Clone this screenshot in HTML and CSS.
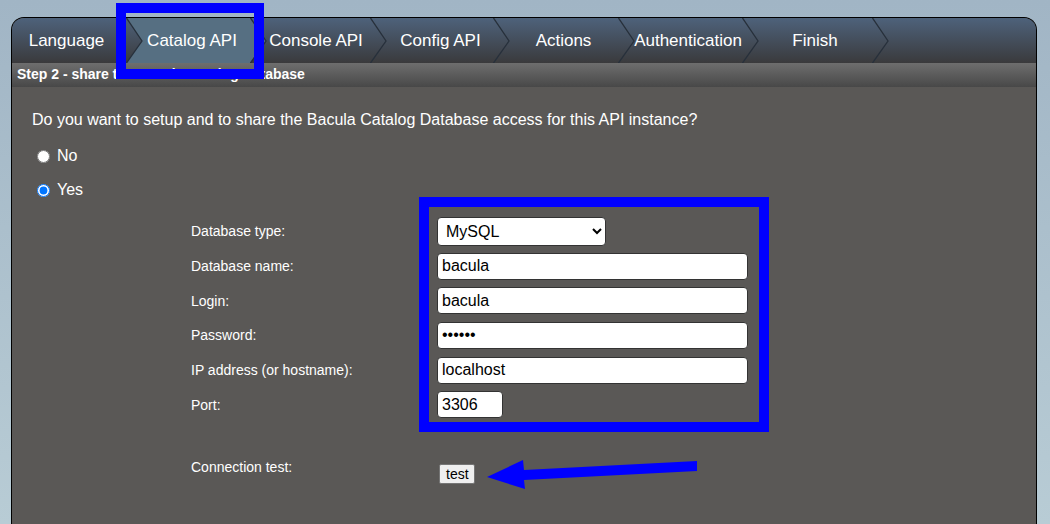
FILE: index.html
```html
<!DOCTYPE html>
<html>
<head>
<meta charset="utf-8">
<link rel="stylesheet" href="styles.css">
</head>
<body>
<div class="page">
  <div class="panel">
    <div class="tabs">
      <div class="tab t1"><span class="label">Language</span><svg class="chev" width="18" height="45" viewBox="0 0 18 45"><polyline points="0.5,0 16,23 0.5,45" fill="none" stroke="#27303b" stroke-width="1.3"/></svg></div>
      <div class="tab t2 active"><span class="label">Catalog API</span><svg class="chev" width="18" height="45" viewBox="0 0 18 45"><polyline points="0.5,0 16,23 0.5,45" fill="none" stroke="#27303b" stroke-width="1.3"/></svg></div>
      <div class="tab t3"><span class="label">Console API</span><svg class="chev" width="18" height="45" viewBox="0 0 18 45"><polyline points="0.5,0 16,23 0.5,45" fill="none" stroke="#27303b" stroke-width="1.3"/></svg></div>
      <div class="tab t4"><span class="label">Config API</span><svg class="chev" width="18" height="45" viewBox="0 0 18 45"><polyline points="0.5,0 16,23 0.5,45" fill="none" stroke="#27303b" stroke-width="1.3"/></svg></div>
      <div class="tab t5"><span class="label">Actions</span><svg class="chev" width="18" height="45" viewBox="0 0 18 45"><polyline points="0.5,0 16,23 0.5,45" fill="none" stroke="#27303b" stroke-width="1.3"/></svg></div>
      <div class="tab t6"><span class="label">Authentication</span><svg class="chev" width="18" height="45" viewBox="0 0 18 45"><polyline points="0.5,0 16,23 0.5,45" fill="none" stroke="#27303b" stroke-width="1.3"/></svg></div>
      <div class="tab t7"><span class="label">Finish</span><svg class="chev" width="18" height="45" viewBox="0 0 18 45"><polyline points="0.5,0 16,23 0.5,45" fill="none" stroke="#27303b" stroke-width="1.3"/></svg></div>
    </div>
    <div class="step">Step 2 - share the Bacula Catalog Database</div>
    <div class="content">
      <p class="question">Do you want to setup and to share the Bacula Catalog Database access for this API instance?</p>
      <label class="choice"><input type="radio" name="share"> No</label>
      <label class="choice"><input type="radio" name="share" checked> Yes</label>
      <div class="form">
        <div class="lbl">Database type:</div>
        <div class="fld"><select class="sel"><option>MySQL</option><option>PostgreSQL</option></select></div>
        <div class="lbl">Database name:</div>
        <div class="fld"><input class="txt" type="text" value="bacula"></div>
        <div class="lbl">Login:</div>
        <div class="fld"><input class="txt" type="text" value="bacula"></div>
        <div class="lbl">Password:</div>
        <div class="fld"><input class="txt" type="password" value="bacula"></div>
        <div class="lbl">IP address (or hostname):</div>
        <div class="fld"><input class="txt" type="text" value="localhost"></div>
        <div class="lbl">Port:</div>
        <div class="fld"><input class="txt port" type="text" value="3306"></div>
      </div>
      <div class="conn">
        <div class="lbl conn-lbl">Connection test:</div>
        <div class="conn-fld"><button class="btn" type="button">test</button></div>
      </div>
    </div>
  </div>
</div>
<div class="mark mark-tab"></div>
<div class="mark mark-form"></div>
<svg class="arrow" width="1050" height="524" viewBox="0 0 1050 524">
  <polygon points="487,477 523,460 524,470 697,461 697,471 524,480 525,489" fill="#0000ff"/>
</svg>
</body>
</html>
```
FILE: styles.css
```css
html, body {
  margin: 0;
  padding: 0;
  height: 100%;
}
body {
  background: linear-gradient(#a1b5c5, #b8ccd5);
  font-family: "Liberation Sans", Arial, sans-serif;
  overflow: hidden;
  position: relative;
}
.page {
  padding: 17px 13px 0 11px;
  height: 100%;
  box-sizing: border-box;
}
.panel {
  border: 1px solid #000;
  border-bottom: none;
  border-radius: 13px 13px 0 0;
  overflow: hidden;
  background: #5a5856;
  height: 100%;
  box-sizing: border-box;
}
.tabs {
  display: flex;
  height: 45px;
  background: linear-gradient(#4e627b, #3a3a3c);
}
.tab {
  position: relative;
  height: 45px;
  line-height: 46px;
  color: #fff;
  font-size: 17px;
  text-align: center;
  padding-left: 16px;
  box-sizing: border-box;
  flex: none;
}
.tab .label {
  position: relative;
  z-index: 1;
}
.tab .chev {
  position: absolute;
  right: -18px;
  top: 0;
  z-index: 2;
}
.tab.active::before {
  content: "";
  position: absolute;
  left: 0;
  top: 0;
  width: calc(100% + 16px);
  height: 100%;
  background: #566f82;
  clip-path: polygon(0 0, calc(100% - 16px) 0, 100% 51%, calc(100% - 16px) 100%, 0 100%, 16px 51%);
  z-index: 0;
}
.tab.active { z-index: 1; }
.t1 { width: 114px; padding-left: 0; padding-right: 5px; }
.t2 { width: 124px; padding-left: 8px; }
.t3 { width: 120px; padding-left: 12px; }
.t4 { width: 123px; padding-left: 18px; }
.t5 { width: 125px; padding-left: 16px; }
.t6 { width: 124px; padding-left: 16px; }
.t7 { width: 130px; padding-left: 16px; }
.step {
  height: 24px;
  line-height: 22px;
  background: linear-gradient(#6e6e6e, #484848);
  color: #fff;
  font-weight: bold;
  font-size: 14px;
  padding-left: 5px;
  white-space: nowrap;
  overflow: hidden;
}
.content {
  padding: 23px 0 0 20px;
  color: #fff;
}
.question {
  margin: 0;
  font-size: 16px;
  line-height: 19px;
}
.choice {
  display: flex;
  align-items: center;
  height: 34px;
  font-size: 16px;
}
.choice:first-of-type { margin-top: 10px; }
.choice input {
  margin: 0 7px 0 5px;
  width: 13px;
  height: 13px;
}
.form {
  display: grid;
  grid-template-columns: 246px auto;
  grid-auto-rows: 34.7px;
  align-items: center;
  margin: 7px 0 0 159px;
}
.lbl {
  font-size: 14px;
  line-height: 16px;
}
.fld { display: flex; align-items: center; }
.sel {
  width: 169px;
  height: 29px;
  font-family: "Liberation Sans", Arial, sans-serif;
  font-size: 16px;
  color: #000;
  background: #fff;
  border: 1px solid #333;
  border-radius: 4px;
  padding: 0 4px;
}
.txt {
  width: 311px;
  height: 27px;
  box-sizing: border-box;
  border: 1px solid #333;
  border-radius: 4px;
  background: #fff;
  font-family: "Liberation Sans", Arial, sans-serif;
  font-size: 16px;
  color: #000;
  padding: 0 4px;
}
.port { width: 66px; }
.conn {
  display: flex;
  margin: 37px 0 0 159px;
}
.conn-lbl { width: 248px; }
.conn-fld { padding-top: 5px; }
.btn {
  font-family: "Liberation Sans", Arial, sans-serif;
  font-size: 14px;
  background: #efefef;
  border: 1px solid #767676;
  border-radius: 2px;
  padding: 0 6px;
  width: 36px;
  height: 20px;
  color: #000;
}
.mark {
  position: absolute;
  border: 10px solid #0000ff;
  box-sizing: border-box;
  pointer-events: none;
  z-index: 10;
}
.mark-tab { left: 116px; top: 3px; width: 148px; height: 76px; }
.mark-form { left: 419px; top: 197px; width: 350px; height: 235px; }
.arrow {
  position: absolute;
  left: 0;
  top: 0;
  pointer-events: none;
  z-index: 10;
}
```
